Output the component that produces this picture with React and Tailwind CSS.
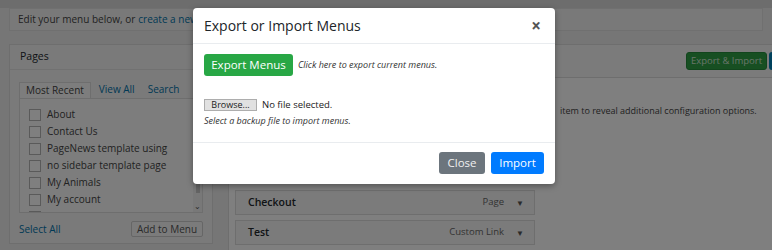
import React from 'react';

const pages = ['About', 'Contact Us', 'PageNews template using', 'no sidebar template page', 'My Animals', 'My account'];

function MenuRow({ title, type }) {
    return (
        <div className="flex items-center h-[25px] border border-[#dcdcdc] bg-[#f6f6f6] pl-[12px] pr-[10px]">
            <span className="text-[10.5px] font-semibold text-[#23282d]">{title}</span>
            <span className="ml-auto text-[9.5px] text-[#666]">{type}</span>
            <span className="ml-[12px] text-[8px] text-[#555]">▼</span>
        </div>
    );
}

export default function App() {
    return (
        <div className="relative w-[772px] h-[250px] overflow-hidden bg-[#ededed] font-['Open_Sans','Liberation_Sans',sans-serif] text-[#444]">
            {/* page under the modal */}
            <div className="h-[8px] bg-[#dadada]" />
            <div className="mx-[9px] h-[23px] flex items-center border border-[#e0e0e0] bg-[#f3f3f3] px-[8px] text-[10px] whitespace-nowrap">
                Edit your menu below, or <a className="ml-[3px] text-[#0073aa]">create a new menu</a>.
            </div>

            <div className="flex mt-[13px] ml-[9px]">
                {/* left column */}
                <div className="shrink-0 w-[204px] h-[200px] border border-[#dcdcdc] bg-[#f4f4f4] flex flex-col">
                    <div className="h-[25px] flex items-center px-[10px] text-[10.5px] text-[#23282d] border-b border-[#e2e2e2]">
                        Pages
                    </div>
                    <div className="px-[9px] pt-[12px]">
                        <div className="flex text-[10px] h-[16px] items-end whitespace-nowrap">
                            <span className="h-[16px] px-[6px] flex items-center border border-b-0 border-[#dcdcdc] bg-[#fafafa]">Most Recent</span>
                            <span className="ml-[8px] pb-[1px] text-[#0073aa]">View All</span>
                            <span className="ml-[13px] pb-[1px] text-[#0073aa]">Search</span>
                        </div>
                        <div className="relative h-[115px] border border-[#dcdcdc] bg-[#fafafa] pt-[7px] overflow-hidden">
                            {pages.map((p) => (
                                <div key={p} className="flex items-center h-[17px] pl-[9px] text-[10px] whitespace-nowrap">
                                    <span className="w-[12px] h-[12px] border border-[#b4b4b4] bg-white" />
                                    <span className="ml-[6px]">{p}</span>
                                </div>
                            ))}
                            <div className="flex items-center h-[10px] pl-[9px]">
                                <span className="w-[12px] h-[12px] border border-[#b4b4b4] bg-white mt-[8px]" />
                            </div>
                            <div className="absolute right-0 top-0 bottom-0 w-[9px] bg-[#f0f0f0] flex flex-col items-center justify-end pb-[2px]">
                                <span className="absolute top-[4px] w-[4px] h-[90px] bg-[#c8c8c8]" />
                                <span className="text-[8px] text-[#555] leading-none">⌄</span>
                            </div>
                        </div>
                        <div className="flex items-center justify-between mt-[8px]">
                            <span className="text-[10px] text-[#0073aa]">Select All</span>
                            <span className="h-[16px] w-[72px] flex items-center justify-center border border-[#ccc] bg-[#f7f7f7] text-[10px] text-[#555] rounded-[2px] whitespace-nowrap">
                                Add to Menu
                            </span>
                        </div>
                    </div>
                </div>

                {/* right column */}
                <div className="shrink-0 ml-[15px] w-[548px] h-[210px] border border-[#dcdcdc] bg-white">
                    <div className="h-[33px] flex items-center justify-end border-b border-[#dcdcdc] bg-[#f6f6f6]">
                        <span className="h-[18px] w-[81px] flex items-center justify-center bg-[#2e9e45] border border-[#258a3a] rounded-[3px] text-[9.5px] text-[#cfe9d3] whitespace-nowrap">
                            Export &amp; Import
                        </span>
                        <span className="ml-[2px] h-[18px] w-[6px] bg-[#0085ba] rounded-l-[3px]" />
                    </div>
                    <div className="h-[50px] flex items-center pl-[331px] text-[9px] text-[#444] whitespace-nowrap pt-[16px]">
                        item to reveal additional configuration options.
                    </div>
                    <div className="pl-[6px] pr-[240px] pt-[62px] flex flex-col gap-[5px]">
                        <MenuRow title="Checkout" type="Page" />
                        <MenuRow title="Test" type="Custom Link" />
                    </div>
                </div>
            </div>

            {/* backdrop */}
            <div className="absolute inset-0 bg-black/50" />

            {/* modal */}
            <div className="absolute left-[193px] top-[8px] w-[362px] h-[176px] bg-white rounded-[4px] shadow-[0_2px_6px_rgba(0,0,0,0.35)] flex flex-col">
                <div className="h-[36px] flex items-center justify-between pl-[11px] pr-[14px] border-b border-[#e9ecef]">
                    <span className="text-[14px] text-[#212529]">Export or Import Menus</span>
                    <span className="text-[17px] font-bold leading-none text-[#555]">×</span>
                </div>
                <div className="h-[99px] px-[11px] pt-[10px] border-b border-[#e9ecef]">
                    <div className="flex items-center">
                        <span className="h-[22px] w-[89px] flex items-center justify-center bg-[#28a745] rounded-[3px] text-[11.5px] text-white whitespace-nowrap">
                            Export Menus
                        </span>
                        <span className="ml-[5px] italic text-[9px] text-[#333] whitespace-nowrap">Click here to export current menus.</span>
                    </div>
                    <div className="flex items-center mt-[22px]">
                        <span className="h-[12px] w-[53px] flex items-center justify-center border border-[#adadad] bg-[#e1e1e1] text-[9px] text-[#222]">
                            Browse...
                        </span>
                        <span className="ml-[5px] text-[9.5px] text-[#222]">No file selected.</span>
                    </div>
                    <div className="mt-[2px] italic text-[9px] text-[#333]">Select a backup file to import menus.</div>
                </div>
                <div className="flex-1 flex items-start justify-end gap-[6px] pr-[11px] pt-[9px]">
                    <span className="h-[22px] w-[46px] flex items-center justify-center bg-[#6c757d] rounded-[3px] text-[11.5px] text-[#f0f0f0]">
                        Close
                    </span>
                    <span className="h-[22px] w-[53px] flex items-center justify-center bg-[#007bff] rounded-[3px] text-[11.5px] text-white">
                        Import
                    </span>
                </div>
            </div>
        </div>
    );
}
